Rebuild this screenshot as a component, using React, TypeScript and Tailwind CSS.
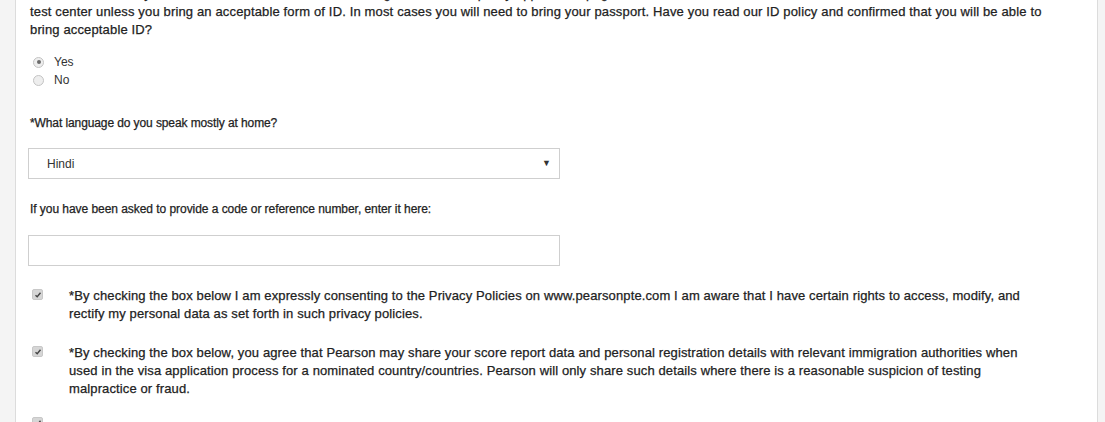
import React from 'react'

const Radio = ({ checked, label }: { checked?: boolean; label: string }) => (
  <label className="flex items-center h-[18px]">
    <span className="w-[11px] h-[11px] rounded-full border border-[#c4c4c4] bg-[#eeeeee] flex items-center justify-center ml-[3px]">
      {checked && <span className="w-[4px] h-[4px] rounded-full bg-[#6b6b6b]" />}
    </span>
    <span className="ml-[10px] text-[12px] text-[#333]">{label}</span>
  </label>
)

const Check = () => (
  <span className="w-[11px] h-[11px] rounded-[2px] bg-[#d6d6d6] border border-[#c8c8c8] flex items-center justify-center shrink-0 mt-[2px] ml-[2px]">
    <svg width="8" height="8" viewBox="0 0 8 8">
      <path d="M1.5 4.2 L3.2 5.8 L6.5 1.8" fill="none" stroke="#444" strokeWidth="1.4" />
    </svg>
  </span>
)

export default function App() {
  return (
    <div className="w-[1105px] h-[422px] overflow-hidden bg-[#f4f4f4] font-['Liberation_Sans',Arial,sans-serif]">
      <div className="ml-[15px] w-[1083px] h-full bg-white border-x border-[#dcdcdc] pl-[14px] pr-[10px] flex flex-col">
        <p className="mt-[-15px] text-[13px] tracking-[0.15px] text-[#222] leading-[18px] [-webkit-text-stroke:0.25px_#222]">
          *Please check that you have the correct ID before scheduling a test. Our ID policy appears on pages 10 and 11 of the Test Taker Handbook. You will not be admitted to the
          <br />
          test center unless you bring an acceptable form of ID. In most cases you will need to bring your passport. Have you read our ID policy and confirmed that you will be able to
          <br />
          bring acceptable ID?
        </p>

        <div className="mt-[14px] flex flex-col">
          <Radio checked label="Yes" />
          <Radio label="No" />
        </div>

        <p className="mt-[25px] text-[12px] tracking-[-0.1px] text-[#222] leading-[18px] [-webkit-text-stroke:0.25px_#222]">*What language do you speak mostly at home?</p>

        <div className="mt-[16px] ml-[-2px] w-[532px] h-[31px] shrink-0 border border-[#cfcfcf] flex items-center justify-between pl-[18px] pr-[8px]">
          <span className="text-[12px] text-[#333]">Hindi</span>
          <span className="text-[9px] text-[#333]">▼</span>
        </div>

        <p className="mt-[21px] text-[12px] tracking-[-0.05px] text-[#222] leading-[18px] [-webkit-text-stroke:0.25px_#222]">If you have been asked to provide a code or reference number, enter it here:</p>

        <div className="mt-[17px] ml-[-2px] w-[532px] h-[31px] shrink-0 border border-[#cfcfcf]" />

        <div className="mt-[21px] flex">
          <Check />
          <p className="ml-[26px] text-[13px] tracking-[0.12px] text-[#222] leading-[18px] [-webkit-text-stroke:0.25px_#222]">
            *By checking the box below I am expressly consenting to the Privacy Policies on www.pearsonpte.com I am aware that I have certain rights to access, modify, and
            <br />
            rectify my personal data as set forth in such privacy policies.
          </p>
        </div>

        <div className="mt-[21px] flex">
          <Check />
          <p className="ml-[26px] text-[13px] tracking-[0.12px] text-[#222] leading-[18px] [-webkit-text-stroke:0.25px_#222]">
            *By checking the box below, you agree that Pearson may share your score report data and personal registration details with relevant immigration authorities when
            <br />
            used in the visa application process for a nominated country/countries. Pearson will only share such details where there is a reasonable suspicion of testing
            <br />
            malpractice or fraud.
          </p>
        </div>

        <div className="mt-[17px] flex shrink-0">
          <Check />
        </div>
      </div>
    </div>
  )
}
